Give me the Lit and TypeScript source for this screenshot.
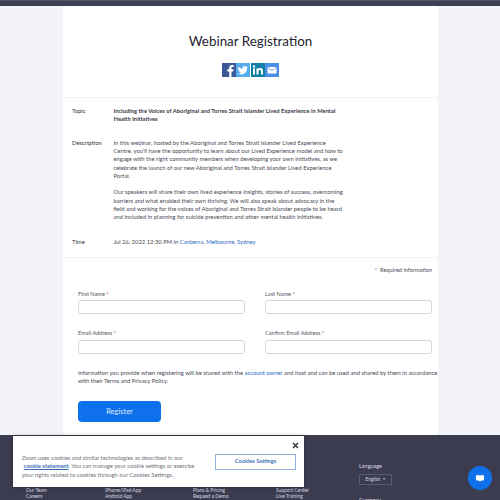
import { LitElement, html, css } from "lit";
import { customElement } from "lit/decorators.js";

@customElement("app-root")
export class AppRoot extends LitElement {
  static styles = css`
    :host { display: block; position: relative; width: 500px; height: 500px; overflow: hidden; background: #f3f4f8; font-family: Lato, "Open Sans", sans-serif; color: #4a4a58; }
    .topbar { height: 6px; background: #3f3f53; border-top: 1px solid #55556a; box-sizing: border-box; }
    .card { width: 375px; height: 429px; margin-left: 63px; background: #fff; box-sizing: border-box; display: flex; flex-direction: column; }
    .head { height: 92px; flex: none; display: flex; flex-direction: column; align-items: center; box-sizing: border-box; padding-top: 26px; border-bottom: 1px solid #f2f3f5; }
    h1 { margin: 0; font-size: 13.4px; line-height: 18px; font-weight: 400; color: #232333; }
    .share { display: flex; gap: .67px; margin-top: 13px; }
    .share svg { display: block; width: 14px; height: 14px; }
    .info { height: 160px; flex: none; box-sizing: border-box; padding: 9px 0 0 9px; border-bottom: 1px solid #f2f3f5; font-size: 5.85px; line-height: 8.35px; }
    .row { display: flex; }
    .row + .row { margin-top: 15px; }
    .row.t { margin-top: 16px; }
    .k { width: 41.5px; flex: none; color: #333342; }
    .v { width: 232px; }
    .v p { margin: 0 0 8px; }
    .v p:last-child { margin: 0; }
    .strong { color: #3a3a48; font-weight: 700; font-size: 5.8px; }
    a { color: #2d6cc4; text-decoration: none; }
    .form { flex: 1; padding: 0 6px 0 15px; font-size: 5.6px; line-height: 8px; position: relative; }
    .req { text-align: right; margin: 7.5px 0 0; }
    .req i { color: #c0392b; font-style: normal; margin-right: 3px; }
    .grid { display: grid; grid-template-columns: 166.5px 166.5px; column-gap: 20.5px; row-gap: 15px; margin-top: 16px; }
    label { display: block; margin-bottom: 2.5px; color: #55555f; }
    label i { color: #c0392b; font-style: normal; }
    .box { height: 14px; box-sizing: border-box; border: 1px solid #d5d7de; border-radius: 3px; background: #fff; }
    .note { margin: 15px -6px 0 0; font-size: 5.85px; line-height: 8.4px; white-space: nowrap; }
    .btn { width: 83px; height: 21px; margin-top: 16px; border: 0; border-radius: 4px; background: #0e71eb; color: #dfeaff; font: 7.5px Lato, sans-serif; display: block; padding: 0; }
    .footer { position: absolute; left: 0; right: 0; top: 435px; height: 65px; background: #3c3c50; color: #d8d8e0; font-size: 4.9px; line-height: 6px; }
    .col { position: absolute; top: 52px; white-space: nowrap; }
    .lang { position: absolute; left: 359px; top: 28px; font-size: 5.5px; }
    .sel { width: 33px; height: 11.500px; margin-top: 4.500px; border: 1px solid #5c5c70; box-sizing: border-box; display: flex; align-items: center; justify-content: center; font-size: 4.8px; }
    .sel b { font-size: 3px; margin-left: 2px; }
    .cap { margin-top: 12px; }
    .cookie { position: absolute; left: 13px; top: 435.500px; width: 291px; height: 51px; background: #fff; color: #73737b; font-size: 5.85px; line-height: 8.6px; box-shadow: 0 0 4px rgba(0,0,0,.3); display: flex; align-items: flex-start; box-sizing: border-box; padding: 18px 0 0 8.700px; }
    .cookie .txt { width: 187px; white-space: nowrap; }
    .cookie a { color: #3b6fb5; font-weight: 700; text-decoration: underline; margin-left: 2px; }
    .cs { position: absolute; left: 202px; top: 18px; width: 81px; height: 16.500px; border: 1px solid #8fb2dc; box-sizing: border-box; color: #3b74b4; font-size: 5.6px; font-weight: 700; display: flex; align-items: center; justify-content: center; }
    .x { position: absolute; right: 5px; top: 6px; width: 7px; height: 7px; }
    .chat { position: absolute; left: 468px; top: 466px; width: 24px; height: 24px; border-radius: 50%; background: #0e71eb; display: flex; align-items: center; justify-content: center; }
  `;
  render() {
    return html`
      <div class="topbar"></div>
      <div class="card">
        <div class="head">
          <h1>Webinar Registration</h1>
          <div class="share">
            <svg viewBox="0 0 14 14"><rect width="14" height="14" fill="#3b5998"/><path d="M9.5 14V8.4h1.8l.3-2.100H9.500V5c0-.6.2-1 1-1h1.200V2.100C11.500 2.100 10.800 2 10 2 8.300 2 7.200 3 7.200 4.800v1.500H5.300v2.100h1.900V14z" fill="#fff"/></svg>
            <svg viewBox="0 0 14 14"><rect width="14" height="14" fill="#55acee"/><path d="M11.800 4.100c-.4.200-.8.300-1.200.3.400-.2.800-.6.900-1.100-.4.200-.9.400-1.300.5a2.100 2.100 0 0 0-3.600 1.900C4.900 5.600 3.400 4.800 2.400 3.500c-.6 1-.3 2.200.6 2.800-.3 0-.6-.1-.9-.3 0 1 .7 1.900 1.700 2.100-.3.100-.6.100-.9 0 .3.900 1.100 1.400 2 1.500-.9.700-2 1-3.100.9 3.900 2.200 9.300.3 9.200-5.300.4-.3.700-.7.800-1.100z" fill="#fff"/></svg>
            <svg viewBox="0 0 14 14"><rect width="14" height="14" fill="#0f7ea5"/><rect x="2" y="5.300" width="2" height="6.200" fill="#fff"/><circle cx="3" cy="3.400" r="1.200" fill="#fff"/><path d="M5.500 5.300h1.900v.9c.4-.6 1.100-1.100 2.100-1.100 1.800 0 2.500 1.200 2.500 3v3.400h-2V8.400c0-.9-.3-1.500-1.100-1.500-.9 0-1.400.6-1.400 1.500v3.100h-2z" fill="#fff"/></svg>
            <svg viewBox="0 0 14 14"><rect width="14" height="14" fill="#4a90e8"/><rect x="2.500" y="4" width="9" height="6.500" rx=".8" fill="#fff"/><path d="M3 4.800l4 2.700 4-2.700" fill="none" stroke="#4a90e8" stroke-width=".8"/></svg>
          </div>
        </div>
        <div class="info">
          <div class="row"><div class="k">Topic</div><div class="v strong">Including the Voices of Aboriginal and Torres Strait Islander Lived Experience in Mental Health Initiatives</div></div>
          <div class="row"><div class="k">Description</div><div class="v">
            <p>In this webinar, hosted by the Aboriginal and Torres Strait Islander Lived Experience<br>Centre, you'll have the opportunity to learn about our Lived Experience model and how to<br>engage with the right community members when developing your own initiatives, as we<br>celebrate the launch of our new Aboriginal and Torres Strait Islander Lived Experience<br>Portal.</p>
            <p>Our speakers will share their own lived experience insights, stories of success, overcoming<br>barriers and what enabled their own thriving. We will also speak about advocacy in the<br>field and working for the voices of Aboriginal and Torres Strait Islander people to be heard<br>and included in planning for suicide prevention and other mental health initiatives.</p>
          </div></div>
          <div class="row t"><div class="k">Time</div><div class="v">Jul 26, 2022 12:30 PM in <a>Canberra, Melbourne, Sydney</a></div></div>
        </div>
        <div class="form">
          <div class="req"><i>*</i>Required information</div>
          <div class="grid">
            <div><label>First Name <i>*</i></label><div class="box"></div></div>
            <div><label>Last Name <i>*</i></label><div class="box"></div></div>
            <div><label>Email Address <i>*</i></label><div class="box"></div></div>
            <div><label>Confirm Email Address <i>*</i></label><div class="box"></div></div>
          </div>
          <div class="note">Information you provide when registering will be shared with the <a>account owner</a> and host and can be used and shared by them in accordance<br>with their Terms and Privacy Policy.</div>
          <button class="btn">Register</button>
        </div>
      </div>
      <div class="footer">
        <div class="col" style="left:26px">Our Team<br>Careers</div>
        <div class="col" style="left:105px">iPhone/iPad App<br>Android App</div>
        <div class="col" style="left:193px">Plans &amp; Pricing<br>Request a Demo</div>
        <div class="col" style="left:276px">Support Center<br>Live Training</div>
        <div class="lang">Language
          <div class="sel">English <b>▼</b></div>
          <div class="cap">Currency</div>
        </div>
      </div>
      <div class="cookie">
        <div class="txt">Zoom uses cookies and similar technologies as described in our<br><a>cookie statement</a>. You can manage your cookie settings or exercise<br>your rights related to cookies through our Cookies Settings.</div>
        <div class="cs">Cookies Settings</div>
        <svg class="x" viewBox="0 0 7 7"><path d="M1 1l5 5M6 1L1 6" stroke="#333" stroke-width="1.400"/></svg>
      </div>
      <div class="chat"><svg width="10" height="9" viewBox="0 0 12 11"><path d="M2 1.500h8a1 1 0 0 1 1 1v4.500a1 1 0 0 1-1 1H7.500L6 9.500 4.500 8H2a1 1 0 0 1-1-1V2.500a1 1 0 0 1 1-1z" fill="#fff"/></svg></div>
    `;
  }
}
